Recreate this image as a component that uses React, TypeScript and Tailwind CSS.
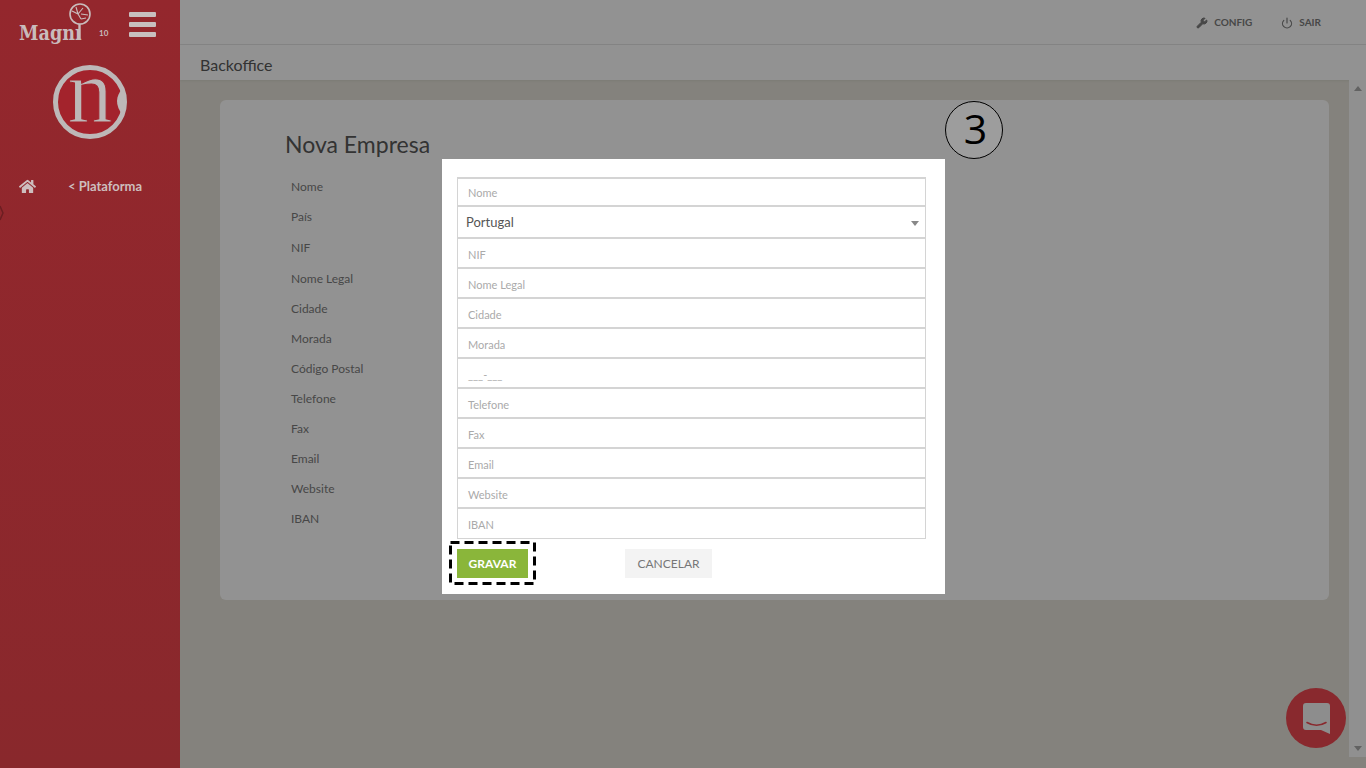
import React from "react";
import { Wrench, Power } from "lucide-react";
import { FaHome } from "react-icons/fa";

const labels: [string, string][] = [
  ["Nome", "h-[30px]"],
  ["País", "h-[31px]"],
  ["NIF", "h-[31px]"],
  ["Nome Legal", "h-[30px]"],
  ["Cidade", "h-[30px]"],
  ["Morada", "h-[30px]"],
  ["Código Postal", "h-[30px]"],
  ["Telefone", "h-[30px]"],
  ["Fax", "h-[30px]"],
  ["Email", "h-[30px]"],
  ["Website", "h-[30px]"],
  ["IBAN", "h-[30px]"],
];
const afterSelect = ["NIF", "Nome Legal", "Cidade", "Morada", "___-___", "Telefone", "Fax", "Email", "Website"];

function Input({ text }: { text: string }) {
  return (
    <div className="h-[30px] border-x border-b-[2px] border-[#d4d4d4] pl-[10px] pt-[4px] flex items-center text-[11px] text-[#aaa]">
      {text}
    </div>
  );
}

function MagniLogo() {
  return (
    <div className="relative w-[110px] h-[46px]">
      <svg className="absolute left-[68px] top-[3px]" width="24" height="38" viewBox="0 0 24 38" fill="none" stroke="#c9bcbc">
        <circle cx="12" cy="11" r="10" strokeWidth="1.6" />
        <path d="M4 8l6 3 3 5M10 11l5-6M13 11l7 1M8 4l2 7M13 16l5-1" strokeWidth="1.1" />
        <path d="M11.5 21v15" strokeWidth="2.4" />
      </svg>
      <span className="absolute left-[19px] top-[20px] text-[20px] leading-[26px] font-bold text-[#c9bcbc] font-['DejaVu_Serif',serif] scale-x-[0.88] origin-left">Magnı</span>
      <span className="absolute left-[99px] top-[28px] text-[8px] leading-[10px] font-bold text-[#c9bcbc] font-['Lato',sans-serif]">10</span>
    </div>
  );
}

function CircleLogo() {
  return (
    <div className="relative w-[76px] h-[76px]">
      <svg width="76" height="76" viewBox="0 0 76 76">
        <circle cx="38" cy="38" r="34.5" fill="#a3232c" stroke="#bdb8b8" strokeWidth="5" />
        <path d="M70 25Q60 37 70 50Q72 37 70 25z" fill="#bdb8b8" />
      </svg>
      <span className="absolute left-0 top-0 w-full text-center text-[90px] leading-[56px] text-[#bdb8b8] font-['Liberation_Serif',serif] [-webkit-text-stroke:1px_#a3232c]">n</span>
    </div>
  );
}

export default function App() {
  return (
    <div className="relative w-[1366px] h-[768px] overflow-hidden bg-[#dcd9d0] font-['Lato',sans-serif] flex">
      <aside className="w-[180px] h-full shrink-0 bg-gradient-to-b from-[#94272d] to-[#89282c] flex flex-col text-[#cdbebe] relative z-10">
        <div className="h-[46px] relative flex">
          <MagniLogo />
          <div className="absolute left-[129px] top-[12px] w-[27px] flex flex-col gap-[5px]">
            <div className="h-[5px] bg-[#c8bfbf] rounded-[1px]" />
            <div className="h-[5px] bg-[#c8bfbf] rounded-[1px]" />
            <div className="h-[5px] bg-[#c8bfbf] rounded-[1px]" />
          </div>
        </div>
        <div className="flex justify-center mt-[18px]">
          <CircleLogo />
        </div>
        <div className="flex items-center mt-[37px] pl-[19px] h-[20px]">
          <FaHome size={17} className="-translate-y-[1px]" />
          <span className="ml-[32px] text-[13px] font-bold">&lt; Plataforma</span>
        </div>
        <svg className="absolute left-0 top-[203px]" width="6" height="20" viewBox="0 0 6 20" fill="none">
          <path d="M0 3l3 7-3 7" stroke="#000" strokeOpacity="0.25" strokeWidth="1.5" />
        </svg>
      </aside>

      <div className="flex-1 flex flex-col min-w-0">
        <header className="h-[45px] bg-[#f4f4f4] border-b border-[#dcdcdc] flex items-center justify-end pr-[45px] pt-[1px] text-[10px] font-bold text-[#777] gap-[29px]">
          <span className="flex items-center gap-[6px]"><Wrench size={12} fill="currentColor" />CONFIG</span>
          <span className="flex items-center gap-[6px]"><Power size={12} strokeWidth={2.4} />SAIR</span>
        </header>
        <div className="h-[35px] bg-[#f4f4f4] pl-[20px] pt-[4px] flex items-center text-[16px] text-[#555] shadow-[0_1px_2px_rgba(0,0,0,0.06)]">Backoffice</div>
        <main className="flex-1 flex relative">
          <div className="flex-1 pl-[40px] pr-[20px] pt-[20px]">
            <section className="w-[1109px] h-[500px] rounded-[6px] bg-[#f4f4f4] pl-[65px] pt-[29px]">
              <h1 className="text-[23px] leading-[30px] text-[#555] mb-[18px]">Nova Empresa</h1>
              <div className="pl-[6px] text-[12px] text-[#777]">
                {labels.map(([l, h]) => (
                  <div key={l} className={h + " flex items-start pt-[1px]"}>{l}</div>
                ))}
              </div>
            </section>
          </div>
          <div className="w-[17px] mb-[11px] bg-[#f1f1f1] flex flex-col items-center justify-between py-[6px]">
            <div className="w-0 h-0 border-x-[4px] border-x-transparent border-b-[5px] border-b-[#a3a3a3]" />
            <div className="w-0 h-0 border-x-[4px] border-x-transparent border-t-[5px] border-t-[#a3a3a3]" />
          </div>
        </main>
      </div>

      <div className="absolute left-[1286px] top-[688px] w-[60px] h-[60px] rounded-full bg-[#e4454d] flex items-center justify-center">
        <svg width="27" height="31" viewBox="0 0 27 31">
          <path d="M3 0h21a3 3 0 0 1 3 3v28l-9-4H3a3 3 0 0 1-3-3V3a3 3 0 0 1 3-3z" fill="#ececec" />
          <path d="M4 19.5c6 3.5 13 3.5 19 0" fill="none" stroke="#e4454d" strokeWidth="1.6" strokeLinecap="round" />
        </svg>
      </div>

      <div className="absolute inset-0 bg-black/40" />

      <div className="absolute left-[442px] top-[159px] w-[503px] h-[435px] bg-white pl-[15px] pr-[19px] pt-[18px] text-[#aaa]">
        <div className="border-t-[2px] border-[#d4d4d4]">
          <div className="h-[28px] border-x border-b-[2px] border-[#d4d4d4] pl-[10px] pt-[3px] flex items-center text-[11px]">Nome</div>
          <div className="h-[32px] border-x border-b-[2px] border-[#d4d4d4] pl-[8px] pr-[6px] pt-[2px] flex items-center justify-between text-[13px] text-[#555]">
            Portugal
            <span className="w-0 h-0 border-x-[4px] border-x-transparent border-t-[5px] border-t-[#888]" />
          </div>
          {afterSelect.map((t) => <Input key={t} text={t} />)}
          <div className="h-[30px] border-x border-b border-[#d4d4d4] pl-[10px] pt-[3px] flex items-center text-[11px]">IBAN</div>
        </div>
        <div className="flex mt-[10px]">
          <div className="relative w-[71px] h-[29px] bg-[#8ab63a] text-white font-bold text-[12px] flex items-center justify-center">
            GRAVAR
            <svg className="absolute left-[-8px] top-[-8px]" width="87" height="44" viewBox="0 0 87 44" fill="none">
              <rect x="1.5" y="1.5" width="84" height="41" stroke="#000" strokeWidth="3" strokeDasharray="9 5" />
            </svg>
          </div>
          <div className="ml-[97px] w-[87px] h-[29px] bg-[#f3f3f3] text-[#777] text-[12px] flex items-center justify-center">CANCELAR</div>
        </div>
      </div>

      <div className="absolute left-[945px] top-[101px] w-[58px] h-[58px] rounded-full border border-black bg-white/10 flex items-center justify-center pl-[3px] pb-[4px] text-[41px] leading-none text-black font-['Open_Sans',sans-serif]">3</div>
    </div>
  );
}
